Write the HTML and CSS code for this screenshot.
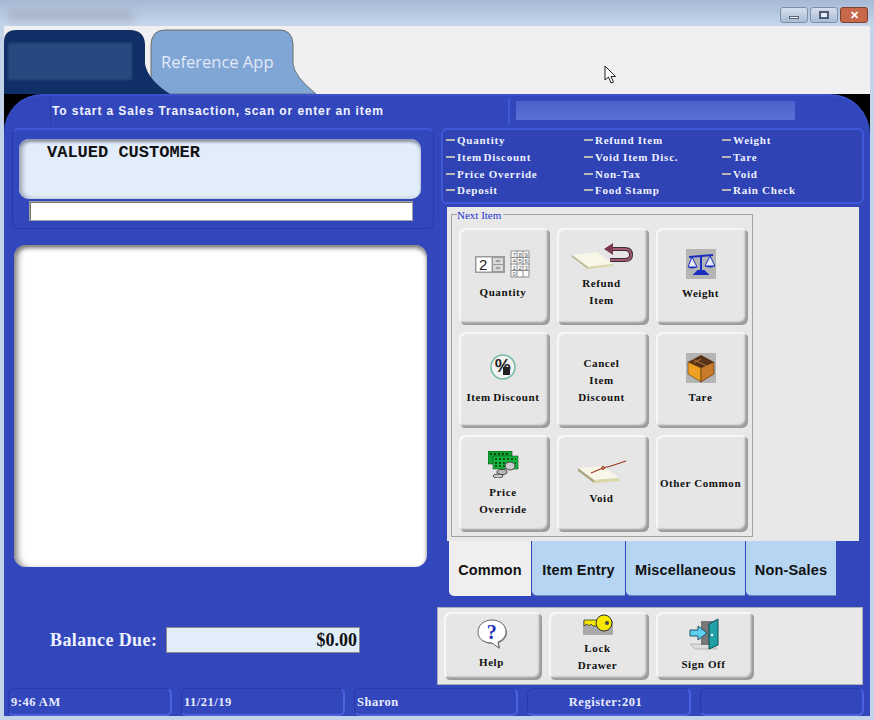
FILE: index.html
```html
<!DOCTYPE html>
<html lang="en">
<head>
  <meta charset="UTF-8" />
  <title>Reference App</title>
  <link rel="stylesheet" href="styles.css">
</head>
<body>
  <div class="titlebar">
    <div class="title-blur"></div>
    <div class="winbtns">
      <div class="winbtn"><span class="min-glyph"></span></div>
      <div class="winbtn"><span class="max-glyph"></span></div>
      <div class="winbtn close">&#10005;</div>
    </div>
  </div>

  <div class="tabstrip">
    <svg class="tabshapes" width="866" height="68" viewBox="0 0 866 68">
      <path d="M147 68V20Q147 4 161 4H276Q288 4 289 18V38Q290 50 312 68Z" fill="#80a6d6" stroke="#6d6d6d" stroke-width="1"/>
      <path d="M0 68V16Q0 4 12 4H126Q140 4 141 18V38Q144 54 166 68Z" fill="#0f2f66"/>
      <text x="157" y="42" class="tablabel">Reference App</text>
    </svg>
    <div class="tab-blur"></div>
    <svg class="cursor" width="13" height="19" viewBox="0 0 13 19">
      <path d="M1 1V15L4.500 12L7 18L9.500 17L7 11.500H11.500Z" fill="#fff" stroke="#222" stroke-width="1"/>
    </svg>
  </div>

  <div class="stage">
    <div class="app">
      <div class="topbar">
        <div class="message">To start a Sales Transaction, scan or enter an item</div>
        <div class="message-fill"></div>
      </div>

      <div class="columns">
        <div class="left">
          <div class="customer">
            <div class="customer-name">VALUED CUSTOMER</div>
            <div class="customer-input"></div>
          </div>
          <div class="receipt"></div>
          <div class="balance">
            <span class="balance-label">Balance Due:</span>
            <span class="balance-value">$0.00</span>
          </div>
        </div>

        <div class="right">
          <div class="indicators">
            <div class="ind">Quantity</div><div class="ind">Refund Item</div><div class="ind">Weight</div>
            <div class="ind tight">Item Discount</div><div class="ind">Void Item Disc.</div><div class="ind">Tare</div>
            <div class="ind">Price Override</div><div class="ind">Non-Tax</div><div class="ind">Void</div>
            <div class="ind">Deposit</div><div class="ind">Food Stamp</div><div class="ind">Rain Check</div>
          </div>

          <div class="common">
            <div class="group">
              <div class="group-label">Next Item</div>
              <div class="keys">
                <div class="key">
                  <svg width="56" height="28" viewBox="0 0 56 28">
                    <rect x="0" y="6" width="30" height="17" fill="#9a9a9a"/>
                    <rect x="1.500" y="7.500" width="15" height="14" fill="#fff"/>
                    <text x="4" y="20" class="svg-digit">2</text>
                    <rect x="18" y="8" width="10" height="6" fill="#d8d8d8"/>
                    <rect x="18" y="15" width="10" height="6" fill="#d8d8d8"/>
                    <path d="M21 11H25M21 18H25" stroke="#666"/>
                    <path d="M36 1H54V27H36ZM42 1V27M48 1V27M36 7.500H54M36 14H54M36 20.500H54" fill="#fff" stroke="#8b8b8b"/>
                    <text class="svg-pad" y="6.500"><tspan x="37.500">7</tspan><tspan x="43.500">8</tspan><tspan x="49.500">9</tspan></text>
                    <text class="svg-pad" y="13"><tspan x="37.500">4</tspan><tspan x="43.500">5</tspan><tspan x="49.500">6</tspan></text>
                    <text class="svg-pad" y="19.500"><tspan x="37.500">1</tspan><tspan x="43.500">2</tspan><tspan x="49.500">3</tspan></text>
                    <text class="svg-pad" y="26"><tspan x="37.500">0</tspan></text>
                  </svg>
                  <span>Quantity</span>
                </div>
                <div class="key refund">
                  <svg width="62" height="27" viewBox="0 0 62 27">
                    <path d="M1 13L26 10L42 22L17 25Z" fill="#f8f6e6"/>
                    <path d="M1 13L17 25V27L1 15Z" fill="#b9b78e"/>
                    <path d="M17 25L42 22V24L17 27Z" fill="#d9d6a8"/>
                    <path d="M40 7H54Q60 7 60 13Q60 18 54 18H39" fill="none" stroke="#3d2a3a" stroke-width="4"/>
                    <path d="M40 7H54Q60 7 60 13Q60 18 54 18H39" fill="none" stroke="#a45a70" stroke-width="2"/>
                    <path d="M33 7L42 1V13Z" fill="#7c3a50"/>
                  </svg>
                  <span>Refund<br>Item</span>
                </div>
                <div class="key">
                  <svg width="30" height="30" viewBox="0 0 30 30">
                    <rect width="30" height="30" fill="#b5b5b5"/>
                    <path d="M3 8L27 6M15 7V23M9 25H21L18 22H12Z" fill="#1a2fc0" stroke="#1a2fc0" stroke-width="2"/>
                    <path d="M6 8L2 18H11ZM24 7L19 17H29Z" fill="#e8e8f4" stroke="#1a2fc0"/>
                    <path d="M2 18Q6 21 11 18ZM19 17Q24 20 29 17Z" fill="#1a2fc0"/>
                  </svg>
                  <span>Weight</span>
                </div>
                <div class="key discount">
                  <svg width="26" height="26" viewBox="0 0 26 26">
                    <circle cx="13" cy="13" r="12" fill="#f3f3f3" stroke="#6fb7a8" stroke-width="1.500"/>
                    <text x="13" y="13" class="svg-percent">%</text>
                    <rect x="13" y="13" width="7" height="8" fill="#222"/>
                  </svg>
                  <span class="snug">Item Discount</span>
                </div>
                <div class="key cancel"><span>Cancel<br>Item<br>Discount</span></div>
                <div class="key nudge">
                  <svg width="30" height="30" viewBox="0 0 30 30">
                    <rect width="30" height="30" fill="#b5b5b5"/>
                    <path d="M15 2L28 9L15 15L2 9Z" fill="#5a3218"/>
                    <path d="M2 9L15 15V29L2 21Z" fill="#f0a020" stroke="#3a2008" stroke-width="0.500"/>
                    <path d="M28 9L15 15V29L28 21Z" fill="#c97a28" stroke="#3a2008" stroke-width="0.500"/>
                    <path d="M6 6L21 13M8 10L15 6" stroke="#a8773c"/>
                  </svg>
                  <span>Tare</span>
                </div>
                <div class="key price">
                  <svg width="31" height="27" viewBox="0 0 31 27">
                    <rect x="0" y="0" width="24" height="13" fill="#10a232" stroke="#0a3a14" stroke-width="0.500"/>
                    <rect x="5" y="5" width="25" height="13" fill="#14b83c" stroke="#0a3a14" stroke-width="0.500"/>
                    <path d="M2 3H22M7 8H28M7 12H28M7 15H18" stroke="#062b0e" stroke-width="1.500" stroke-dasharray="2 2"/>
                    <ellipse cx="22" cy="15" rx="5" ry="4" fill="#c9c9c9" stroke="#444"/>
                    <ellipse cx="14" cy="21" rx="5" ry="2.500" fill="#bbb" stroke="#444"/>
                    <ellipse cx="10" cy="25" rx="5" ry="2" fill="#ccc" stroke="#444"/>
                  </svg>
                  <span>Price<br>Override</span>
                </div>
                <div class="key void">
                  <svg width="50" height="24" viewBox="0 0 50 24">
                    <path d="M1 8L26 6L42 18L17 20Z" fill="#f8f6e6"/>
                    <path d="M1 8L17 20V23L1 11Z" fill="#a9a780"/>
                    <path d="M17 20L42 18V21L17 23Z" fill="#d9d6a8"/>
                    <path d="M14 13L26 8L34 6L49 1" fill="none" stroke="#9c3a20" stroke-width="1.200"/>
                    <circle cx="26" cy="8" r="1.500" fill="none" stroke="#9c3a20"/>
                  </svg>
                  <span>Void</span>
                </div>
                <div class="key nudge"><span>Other Common</span></div>
              </div>
            </div>
          </div>

          <div class="tabs">
            <div class="tab active">Common</div>
            <div class="tab item">Item Entry</div>
            <div class="tab misc">Miscellaneous</div>
            <div class="tab nonsales">Non-Sales</div>
          </div>

          <div class="actions">
            <div class="key action help">
              <svg width="30" height="30" viewBox="0 0 30 30">
                <path d="M16 2C8 2 2 7 2 14C2 21 8 25 16 25L23 30L22 24C27 22 30 18 30 14C30 7 24 2 16 2Z" fill="#8a8a8a"/>
                <path d="M15 1C7 1 1 6 1 13C1 20 7 24 15 24L22 29L21 23C26 21 29 17 29 13C29 6 23 1 15 1Z" fill="#fff" stroke="#666" stroke-width="1"/>
                <text x="15" y="20" class="svg-question">?</text>
              </svg>
              <span>Help</span>
            </div>
            <div class="key action lock">
              <svg width="30" height="22" viewBox="0 0 30 22">
                <rect y="8" width="30" height="14" fill="#a9a9a9"/>
                <path d="M1 7H14V13H10L8 11L6 13L4 11L1 13Z" fill="#f6e800" stroke="#333" stroke-width="0.800"/>
                <circle cx="21" cy="10" r="8" fill="#f6e800" stroke="#333"/>
                <circle cx="24" cy="10" r="2" fill="#444"/>
              </svg>
              <span>Lock<br>Drawer</span>
            </div>
            <div class="key action signoff">
              <svg width="30" height="32" viewBox="0 0 30 32">
                <path d="M1 26L6 31H28L24 26Z" fill="#ddd" stroke="#888" stroke-width="0.500"/>
                <rect x="12" y="3" width="14" height="24" fill="#777"/>
                <path d="M20 6L29 1V27L20 31Z" fill="#22a0a8" stroke="#0d4a50"/>
                <circle cx="23" cy="17" r="1.200" fill="#fff"/>
                <path d="M1 12H9V8L18 15L9 22V18H1Z" fill="#5fd0ef" stroke="#1c5568"/>
              </svg>
              <span>Sign Off</span>
            </div>
          </div>
        </div>
      </div>

      <div class="status">
        <div class="cell">9:46 AM</div>
        <div class="cell">11/21/19</div>
        <div class="cell">Sharon</div>
        <div class="cell center">Register:201</div>
        <div class="cell"></div>
      </div>
    </div>
  </div>
</body>
</html>
```

FILE: styles.css
```css
* { box-sizing: border-box; }
body { margin: 0; width: 874px; height: 720px; overflow: hidden; background: #c3d4ea; font-family: "Liberation Serif", serif; }

.titlebar { height: 26px; display: flex; justify-content: space-between; background: linear-gradient(#a6b9d5, #c6d6ec); overflow: hidden; }
.title-blur { width: 125px; height: 12px; margin: 9px 0 0 8px; background: #a9b6c9; filter: blur(4px); }
.winbtns { display: flex; gap: 2px; margin: 7px 6px 0 0; }
.winbtn { width: 28px; height: 16px; display: flex; align-items: center; justify-content: center; border: 1px solid #7f8fa8; border-radius: 3px; background: linear-gradient(#d5e0ee, #a9bbd3); }
.min-glyph { width: 10px; height: 3px; margin-top: 5px; background: #f4f4f4; border: 1px solid #56647c; }
.max-glyph { width: 10px; height: 8px; background: #e8eef6; border: 2px solid #4d5b74; }
.winbtn.close { background: #c8684a; border-color: #7c3f30; color: #fff; font-size: 11px; font-weight: bold; }

.tabstrip { position: relative; height: 68px; margin: 0 4px; background: #f0f0f2; }
.tabshapes { display: block; }
.tablabel { font-family: "Open Sans", sans-serif; font-size: 16.500px; fill: #e2eaf6; }
.tab-blur { position: absolute; left: 4px; top: 17px; width: 124px; height: 37px; background: #27497f; filter: blur(1px); }
.cursor { position: absolute; left: 600px; top: 39px; }

.stage { margin: 0 4px; height: 622px; background: #000; }
.app { height: 622px; display: flex; flex-direction: column; background: #3347bd; border-radius: 38px 40px 0 0; border-top: 2px solid #3a50cc; }

.topbar { display: flex; height: 28px; padding-top: 2px; flex: none; }
.message { width: 460px; margin-left: 46px; padding-left: 1px; color: #f0f3ff; font: bold 12px/26px "Liberation Sans", sans-serif; letter-spacing: 0.900px; border-left: 1px solid #2a3c9e; border-right: 2px solid #4058d6; }
.message-fill { width: 279px; height: 19px; margin: 3px 0 0 6px; background: linear-gradient(#4c61c9, #5a6fd4); }

.columns { display: flex; flex: 1; }
.left { width: 432px; padding: 4px 0 0 8px; }
.customer { width: 422px; height: 101px; padding: 9px 0 0 6px; background: #3347bd; border: 1px solid #2a3ba8; border-top: 2px solid #3f58d6; border-radius: 6px; }
.customer-name { width: 402px; height: 60px; padding: 5px 0 0 28px; background: #e2edfb; border-radius: 10px; box-shadow: inset 0 3px 3px #8a94a8, inset 4px 0 4px #a8b2c4; font: bold 17px/17px "Liberation Mono", monospace; color: #111; }
.customer-input { width: 384px; height: 20px; margin: 2px 0 0 10px; background: #fff; border: 1px solid #a0a0a0; box-shadow: inset 1px 1px 0 #777; }
.receipt { width: 413px; height: 322px; margin: 16px 0 0 2px; background: #fff; border-radius: 12px; box-shadow: inset 0 3px 4px #777, inset 7px 0 6px -3px #999; }
.balance { display: flex; align-items: center; margin: 60px 0 0 38px; }
.balance-label { width: 116px; color: #eef1ff; font-size: 18px; font-weight: bold; letter-spacing: 0.400px; }
.balance-value { width: 194px; height: 26px; padding-right: 2px; line-height: 24px; text-align: right; background: #e2edfb; border: 1px solid #8a8a8a; font-size: 18px; font-weight: bold; color: #111; }

.right { width: 434px; padding: 4px 0 0 5px; }
.indicators { width: 423px; height: 76px; padding: 2px 0 0 3px; display: grid; grid-template-columns: 138px 138px 1fr; grid-auto-rows: 16.700px; background: #2f43b4; border: 2px solid #3f58d6; border-radius: 6px; }
.ind { display: flex; align-items: center; gap: 2px; color: #eef1ff; font-size: 11px; font-weight: bold; letter-spacing: 0.750px; }
.ind::before { content: ""; width: 9px; height: 2px; background: #b8b8b8; }
.tight { word-spacing: -2px; }
.snug { word-spacing: -1px; }

.common { width: 412px; height: 334px; margin: 3px 0 0 6px; padding: 7px 0 0 4px; background: #e8e8e8; }
.group { position: relative; width: 302px; height: 323px; padding: 13px 4px 0 7px; border: 1px solid #a0a0a0; }
.group-label { position: absolute; left: 5px; top: -6px; padding-right: 2px; background: #e8e8e8; color: #2233cc; font-size: 11px; line-height: 12px; }
.keys { display: grid; grid-template-columns: 91px 92px 92px; grid-template-rows: 97px 96px 97px; gap: 7px; }

.key { display: flex; flex-direction: column; align-items: center; justify-content: center; gap: 6px; padding: 0 3px 3px 0; text-align: center; background: #e6e6e6; border-radius: 6px; box-shadow: inset 2px 2px 0 #f7f7f7, inset -3px -3px 2px #9c9c9c; color: #111; font-size: 11px; font-weight: bold; line-height: 16.700px; letter-spacing: 0.600px; }
.key svg { flex: none; }
.svg-digit { font: 15px "Liberation Sans", sans-serif; fill: #222; }
.svg-pad { font: 6px "Liberation Sans", sans-serif; fill: #555; }
.svg-percent { font: bold 18px "Liberation Sans", sans-serif; text-anchor: middle; fill: #222; dominant-baseline: middle; }
.svg-question { font: bold 20px "Liberation Serif", serif; text-anchor: middle; fill: #2030b8; }
.key.refund { padding-bottom: 2px; }
.key.price { padding: 2px 3px 0 0; }
.key.void { padding-top: 2px; }
.key.discount { gap: 9px; padding-top: 3px; }
.key.cancel { padding-top: 4px; }
.key.nudge { padding-top: 2px; }

.tabs { display: flex; height: 55px; margin-left: 8px; }
.tab { display: flex; align-items: center; justify-content: center; height: 55px; margin-right: 1px; padding-top: 3px; background: #b5d5f2; border-bottom: 1px solid #6f88b8; border-radius: 0 0 0 5px; color: #111; font: bold 14.500px "Liberation Sans", sans-serif; letter-spacing: 0.150px; }
.tab.active { width: 82px; background: #efefef; border-bottom: 0; }
.tab.item { width: 93px; }
.tab.misc { width: 119px; }
.tab.nonsales { width: 90px; }

.actions { display: flex; gap: 7px; width: 426px; height: 78px; margin: 11px 0 0 -4px; padding: 4px 0 0 6px; background: #e8e8e8; border: 1px solid #aab; }
.key.action { width: 98px; height: 68px; gap: 3px; padding-bottom: 4px; }
.key.help { gap: 5px; padding-top: 2px; }
.key.lock { width: 100px; justify-content: flex-start; gap: 5px; padding-top: 1px; }
.key.signoff { gap: 6px; padding-top: 3px; }

.status { display: flex; gap: 9px; height: 29px; flex: none; padding: 1px 0 0 4px; }
.cell { width: 164px; height: 28px; padding-left: 2px; line-height: 26px; color: #e8ecff; font-size: 12.500px; font-weight: bold; letter-spacing: 0.500px; background: #3347bd; border: 1px solid #2a3ba8; border-right: 2px solid #4a63e0; border-bottom: 2px solid #4a63e0; border-radius: 6px; }
.cell.center { padding: 0 6px 0 0; text-align: center; }
```
